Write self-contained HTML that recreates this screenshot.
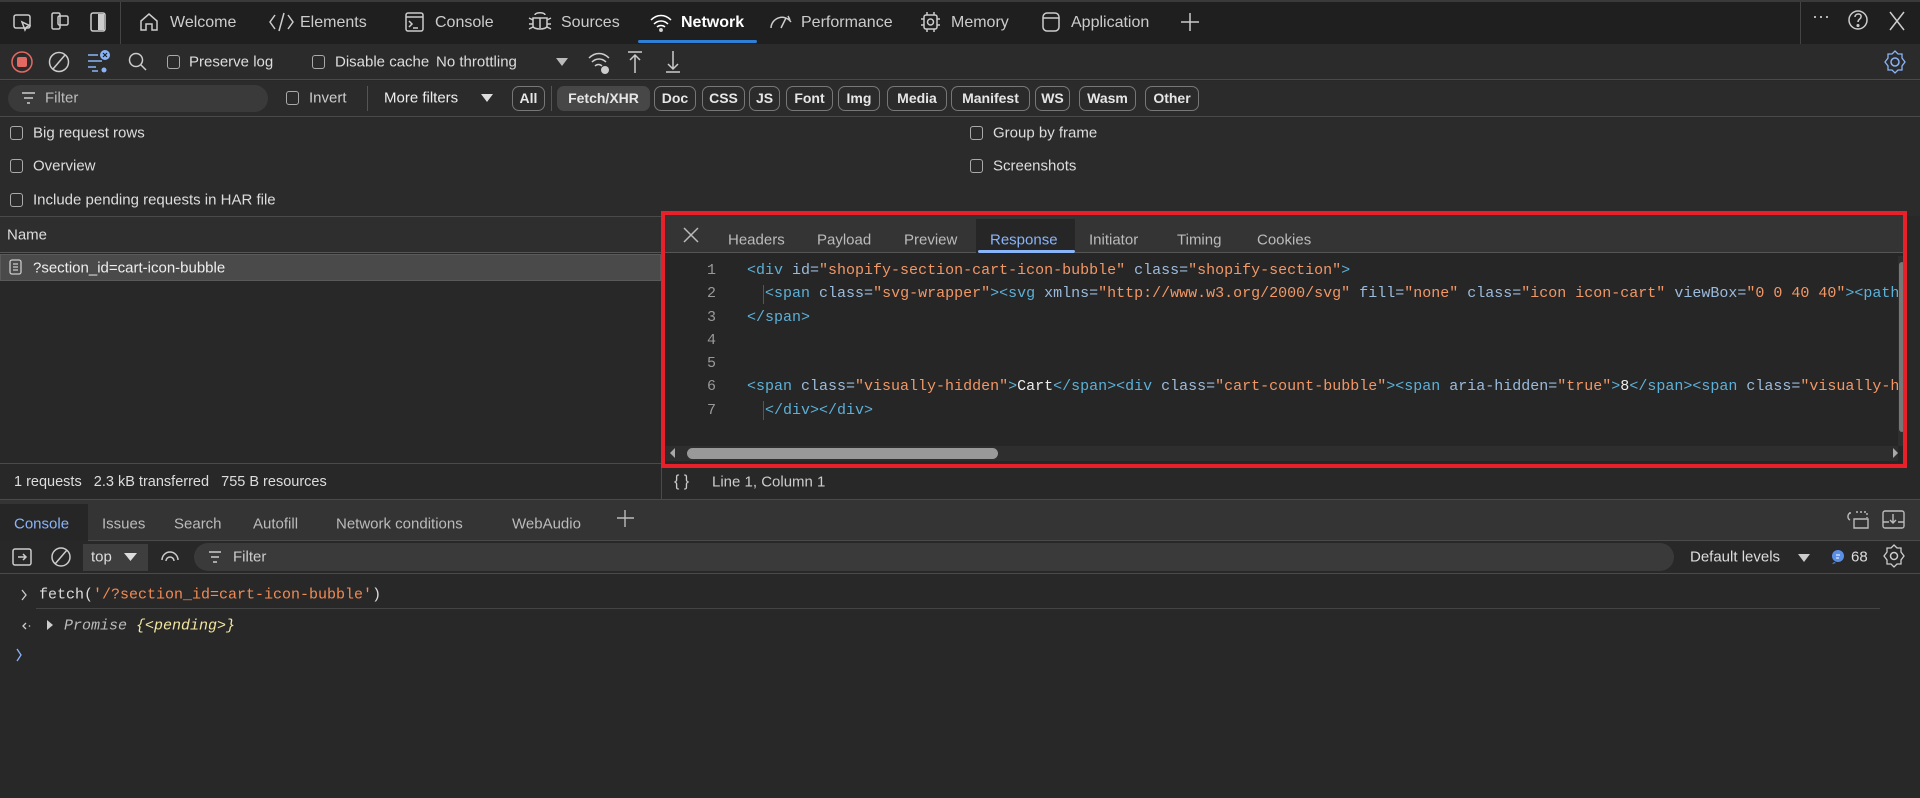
<!DOCTYPE html>
<html><head><meta charset="utf-8"><style>
*{box-sizing:border-box;margin:0;padding:0}
body{width:1920px;height:798px;overflow:hidden;background:#282828;font-family:"Liberation Sans",sans-serif;color:#ddd;position:relative;font-size:15px}
.a{position:absolute;white-space:nowrap}
.t{position:absolute;white-space:nowrap;transform:translateY(-50%)}
svg.o{position:absolute;left:0;top:0;width:1920px;height:798px;overflow:visible}
.cb{position:absolute;width:13px;height:14px;border:1.5px solid #aaa;border-radius:3px;transform:translateY(-50%)}
.btn{position:absolute;top:86px;height:25px;border:1px solid #777;border-radius:7px;color:#e6e6e6;font-size:14px;font-weight:bold;text-align:center;line-height:23px}
.mono{font-family:"Liberation Mono",monospace}
.tg{color:#5db0d7}.at{color:#9bbbdc}.vl{color:#f29766}
</style></head><body>
<!-- top tab bar -->
<div class="a" style="left:0;top:0;width:1920px;height:44px;background:#1f1f1f;border-top:2px solid #3a3a3a"></div>
<div class="a" style="left:120px;top:2px;width:1px;height:42px;background:#444"></div>
<div class="a" style="left:1800px;top:2px;width:1px;height:42px;background:#444"></div>
<svg class="o" viewBox="0 0 1920 798" stroke="#ccc" fill="none" stroke-width="1.5">
<rect x="14" y="15" width="16" height="13" rx="2"/><path d="M22 22l3 8 1.5-3 3-1.5z"/>
<rect x="52" y="13" width="8" height="16" rx="1.5"/><rect x="58" y="16" width="10" height="9" rx="1.5"/>
<rect x="91" y="13" width="14" height="18" rx="2"/><rect x="98" y="14" width="6" height="16" fill="#ccc" stroke="none"/>
<path d="M141 30v-9l8-7 8 7v9h-5v-6h-6v6z"/>
<path d="M275 15l-5 7 5 7M284 13l-5 18M288 15l5 7-5 7"/>
<rect x="406" y="13" width="17" height="18" rx="2"/><path d="M406 17h17M409 21l3 3-3 3M413 28h5"/>
<path d="M535 15c0-3 10-3 10 0M533 18h14v8c0 4-14 4-14 0zM533 20l-4-2M547 20l4-2M533 24h-4M547 24h4M533 27l-4 2M547 27l4 2M540 18v10"/>
<path d="M651 20c6-6 14-6 20 0M654 24c4-4 10-4 14 0M657 27c2-2 6-2 8 0" stroke="#fff"/><circle cx="661" cy="30" r="1.2" fill="#fff"/>
<path d="M771 28a11 11 0 0 1 20-6M781 28l5-10M788 16l2 4"/>
<rect x="924" y="15" width="13" height="14" rx="2"/><circle cx="930.5" cy="22" r="3"/><path d="M927 12v3M934 12v3M927 29v3M934 29v3M921 19h3M921 25h3M937 19h3M937 25h3"/>
<rect x="1043" y="13" width="16" height="18" rx="4"/><path d="M1043 18h16"/>
<path d="M1190 13v18M1181 22h18"/>
<circle cx="1858" cy="20" r="9"/><path d="M1855 17c0-4 7-4 6 0 0 2-3 2-3 5"/><circle cx="1858" cy="25.5" r=".8" fill="#ccc"/>
<path d="M1890 12l14 18M1904 12l-14 18"/>
</svg>
<div class="a" style="left:1812px;top:6px;color:#ccc;font-size:18px">···</div>
<div class="t" style="left:170px;top:23px;font-size:16px;color:#ccc">Welcome</div>
<div class="t" style="left:300px;top:23px;font-size:16px;color:#ccc">Elements</div>
<div class="t" style="left:435px;top:23px;font-size:16px;color:#ccc">Console</div>
<div class="t" style="left:561px;top:23px;font-size:16px;color:#ccc">Sources</div>
<div class="t" style="left:681px;top:23px;font-size:16px;color:#fff;font-weight:bold">Network</div>
<div class="a" style="left:638px;top:40px;width:119px;height:3px;background:#2f7fd6;border-radius:2px"></div>
<div class="t" style="left:801px;top:23px;font-size:16px;color:#ccc">Performance</div>
<div class="t" style="left:951px;top:23px;font-size:16px;color:#ccc">Memory</div>
<div class="t" style="left:1071px;top:23px;font-size:16px;color:#ccc">Application</div>

<!-- toolbar row -->
<div class="a" style="left:0;top:44px;width:1920px;height:36px;background:#2b2b2b;border-bottom:1px solid #4a4a4a"></div>
<svg class="o" viewBox="0 0 1920 798" fill="none" stroke-width="1.5">
<circle cx="22" cy="62" r="10" stroke="#e46962"/><rect x="17" y="57" width="10" height="10" rx="2" fill="#e46962"/>
<circle cx="59" cy="62" r="9.5" stroke="#ccc"/><path d="M53 69l12-14" stroke="#ccc"/>
<path d="M88 55h10M88 61h14M88 67h8M92 71h6" stroke="#8ab4f8"/><circle cx="105" cy="55" r="5" fill="#8ab4f8"/><path d="M103 53l4 4M107 53l-4 4" stroke="#1f1f1f" stroke-width="1.2"/><circle cx="104" cy="70" r="2.5" fill="#8ab4f8"/>
<circle cx="136" cy="60" r="6.5" stroke="#ccc"/><path d="M141 65l5 5" stroke="#ccc"/>
<path d="M556 58h12l-6 8z" fill="#bbb"/>
<path d="M589 58c6-6 14-6 20 0M592 62c4-4 10-4 14 0M595 66c2-2 5-2 7 0" stroke="#ccc"/><circle cx="605" cy="70" r="4" fill="#ccc"/>
<path d="M628 52h14M635 55v18M630 60l5-5 5 5" stroke="#ccc"/>
<path d="M666 72h14M673 51v18M668 64l5 5 5-5" stroke="#ccc"/>
<circle cx="1895" cy="62" r="4" stroke="#8ab4f8"/><path d="M1895 51l3 3h4v4l3 4-3 4v4h-4l-3 3-3-3h-4v-4l-3-4 3-4v-4h4z" stroke="#8ab4f8" stroke-width="1.3"/>
</svg>
<div class="cb" style="left:167px;top:62px"></div><div class="t" style="left:189px;top:62px">Preserve log</div>
<div class="cb" style="left:312px;top:62px"></div><div class="t" style="left:335px;top:62px">Disable cache</div>
<div class="t" style="left:436px;top:62px">No throttling</div>

<!-- filter row -->
<div class="a" style="left:0;top:81px;width:1920px;height:36px;background:#2b2b2b;border-bottom:1px solid #4a4a4a"></div>
<div class="a" style="left:8px;top:85px;width:260px;height:27px;background:#3a3a3a;border-radius:14px"></div>
<svg class="o" viewBox="0 0 1920 798" stroke="#ccc" stroke-width="1.5"><path d="M22 93h13M24 98h9M27 103h3"/><path d="M481 94h12l-6 8z" fill="#ddd" stroke="none"/></svg>
<div class="t" style="left:45px;top:98px;color:#bbb">Filter</div>
<div class="cb" style="left:286px;top:98px"></div><div class="t" style="left:309px;top:98px;color:#ccc">Invert</div>
<div class="a" style="left:367px;top:86px;width:1px;height:25px;background:#555"></div>
<div class="t" style="left:384px;top:98px;color:#eee">More filters</div>
<div class="btn" style="left:512px;width:33px">All</div>
<div class="a" style="left:551px;top:86px;width:1px;height:25px;background:#555"></div>
<div class="btn" style="left:557px;width:93px;background:#474747;border-color:#474747">Fetch/XHR</div>
<div class="btn" style="left:654px;width:42px">Doc</div>
<div class="btn" style="left:702px;width:43px">CSS</div>
<div class="btn" style="left:749px;width:31px">JS</div>
<div class="btn" style="left:786px;width:47px">Font</div>
<div class="btn" style="left:838px;width:42px">Img</div>
<div class="btn" style="left:887px;width:60px">Media</div>
<div class="btn" style="left:951px;width:79px">Manifest</div>
<div class="btn" style="left:1035px;width:35px">WS</div>
<div class="btn" style="left:1079px;width:57px">Wasm</div>
<div class="btn" style="left:1145px;width:54px">Other</div>

<!-- settings checkboxes -->
<div class="a" style="left:0;top:117px;width:1920px;height:99px;background:#2b2b2b"></div>
<div class="cb" style="left:10px;top:133px"></div><div class="t" style="left:33px;top:133px">Big request rows</div>
<div class="cb" style="left:10px;top:166px"></div><div class="t" style="left:33px;top:166px">Overview</div>
<div class="cb" style="left:10px;top:200px"></div><div class="t" style="left:33px;top:200px">Include pending requests in HAR file</div>
<div class="cb" style="left:970px;top:133px"></div><div class="t" style="left:993px;top:133px">Group by frame</div>
<div class="cb" style="left:970px;top:166px"></div><div class="t" style="left:993px;top:166px">Screenshots</div>

<!-- left table -->
<div class="a" style="left:0;top:216px;width:661px;height:37px;background:#2e2e2e;border-top:1px solid #4a4a4a;border-bottom:1px solid #555"></div>
<div class="t" style="left:7px;top:235px;color:#ddd">Name</div>
<div class="a" style="left:0;top:254px;width:661px;height:27px;background:#4a4a4a;border:1px solid #5a5a5a"></div>
<svg class="o" viewBox="0 0 1920 798" stroke="#ccc" stroke-width="1.3" fill="none"><rect x="10" y="260" width="11" height="14" rx="2"/><path d="M13 264h5M13 267h5M13 270h5"/></svg>
<div class="t" style="left:33px;top:268px;color:#eee">?section_id=cart-icon-bubble</div>
<div class="a" style="left:0;top:281px;width:661px;height:182px;background:#282828"></div>
<div class="a" style="left:0;top:463px;width:661px;height:36px;background:#282828;border-top:1px solid #4a4a4a"></div>
<div class="t" style="left:14px;top:482px;color:#ddd;font-size:14.5px">1 requests &nbsp;&nbsp;2.3 kB transferred &nbsp;&nbsp;755 B resources</div>

<!-- response panel -->
<div class="a" style="left:661px;top:215px;width:1246px;height:38px;background:#343434;border-bottom:1px solid #555"></div>
<div class="a" style="left:976px;top:219px;width:99px;height:34px;background:#262626"></div>
<div class="a" style="left:978px;top:250px;width:97px;height:3px;background:#8ab4f8;border-radius:2px"></div>
<svg class="o" viewBox="0 0 1920 798" stroke="#bbb" stroke-width="1.5"><path d="M684 228l14 14M698 228l-14 14"/></svg>
<div class="t" style="left:728px;top:240px;color:#bbb">Headers</div>
<div class="t" style="left:817px;top:240px;color:#bbb">Payload</div>
<div class="t" style="left:904px;top:240px;color:#bbb">Preview</div>
<div class="t" style="left:990px;top:240px;color:#8ab4f8">Response</div>
<div class="t" style="left:1089px;top:240px;color:#bbb">Initiator</div>
<div class="t" style="left:1177px;top:240px;color:#bbb">Timing</div>
<div class="t" style="left:1257px;top:240px;color:#bbb">Cookies</div>
<div class="a" style="left:661px;top:253px;width:1246px;height:210px;background:#262626"></div>
<div class="a mono" style="left:661px;top:259px;width:1237px;height:187px;overflow:hidden;font-size:15px;line-height:23.3px">
<div style="position:absolute;left:0;top:0;width:55px;text-align:right;color:#999">1<br>2<br>3<br>4<br>5<br>6<br>7</div>
<div style="position:absolute;left:102px;top:26px;width:1px;height:19px;background:#555"></div>
<div style="position:absolute;left:102px;top:142px;width:1px;height:19px;background:#555"></div>
<div style="position:absolute;left:86px;top:0;color:#eee;white-space:pre"><span class="tg">&lt;div</span> <span class="at">id=</span><span class="vl">"shopify-section-cart-icon-bubble"</span> <span class="at">class=</span><span class="vl">"shopify-section"</span><span class="tg">&gt;</span>
  <span class="tg">&lt;span</span> <span class="at">class=</span><span class="vl">"svg-wrapper"</span><span class="tg">&gt;&lt;svg</span> <span class="at">xmlns=</span><span class="vl">"http://www.w3.org/2000/svg"</span> <span class="at">fill=</span><span class="vl">"none"</span> <span class="at">class=</span><span class="vl">"icon icon-cart"</span> <span class="at">viewBox=</span><span class="vl">"0 0 40 40"</span><span class="tg">&gt;&lt;path</span>
<span class="tg">&lt;/span&gt;</span>


<span class="tg">&lt;span</span> <span class="at">class=</span><span class="vl">"visually-hidden"</span><span class="tg">&gt;</span>Cart<span class="tg">&lt;/span&gt;&lt;div</span> <span class="at">class=</span><span class="vl">"cart-count-bubble"</span><span class="tg">&gt;&lt;span</span> <span class="at">aria-hidden=</span><span class="vl">"true"</span><span class="tg">&gt;</span>8<span class="tg">&lt;/span&gt;&lt;span</span> <span class="at">class=</span><span class="vl">"visually-hidden</span>
  <span class="tg">&lt;/div&gt;&lt;/div&gt;</span></div>
</div>
<div class="a" style="left:1898px;top:256px;width:9px;height:190px;background:#2e2e2e"></div>
<div class="a" style="left:1899px;top:262px;width:6px;height:170px;background:#777;border-radius:3px"></div>
<div class="a" style="left:665px;top:446px;width:1233px;height:15px;background:#2e2e2e"></div>
<div class="a" style="left:687px;top:448px;width:311px;height:11px;background:#999;border-radius:6px"></div>
<svg class="o" viewBox="0 0 1920 798" fill="#aaa"><path d="M670 453l5-5v10z"/><path d="M1898 453l-5-5v10z"/></svg>
<!-- red box -->
<div class="a" style="left:661px;top:211px;width:1246px;height:257px;border:4px solid #e8202a"></div>
<div class="a" style="left:661px;top:468px;width:1259px;height:31px;background:#282828"></div>
<div class="a" style="left:661px;top:468px;width:1px;height:31px;background:#4a4a4a"></div>
<div class="t" style="left:674px;top:482px;color:#ccc;font-size:16px">{ }</div>
<div class="t" style="left:712px;top:482px;color:#ccc">Line 1, Column 1</div>

<!-- drawer tabs -->
<div class="a" style="left:0;top:499px;width:1920px;height:42px;background:#343434;border-top:1px solid #4a4a4a;border-bottom:1px solid #4a4a4a"></div>
<div class="a" style="left:0;top:504px;width:88px;height:37px;background:#262626"></div>
<div class="t" style="left:14px;top:524px;color:#8ab4f8">Console</div>
<div class="t" style="left:102px;top:524px;color:#bbb">Issues</div>
<div class="t" style="left:174px;top:524px;color:#bbb">Search</div>
<div class="t" style="left:253px;top:524px;color:#bbb">Autofill</div>
<div class="t" style="left:336px;top:524px;color:#bbb">Network conditions</div>
<div class="t" style="left:512px;top:524px;color:#bbb">WebAudio</div>
<svg class="o" viewBox="0 0 1920 798" stroke="#bbb" stroke-width="1.4" fill="none">
<path d="M625 510v17M617 518h17"/>
<path d="M1850 513a4 4 0 0 0 0 7M1849 513h2M1854 519h14v9h-14z"/><path d="M1856 512h11v6" stroke-dasharray="2 2"/>
<rect x="1883" y="511" width="21" height="17" rx="2"/><path d="M1883 522h6M1898 522h6M1893 514v9M1890 520l3 3 3-3"/>
</svg>

<!-- console toolbar -->
<div class="a" style="left:0;top:541px;width:1920px;height:33px;background:#282828;border-bottom:1px solid #4a4a4a"></div>
<div class="a" style="left:83px;top:544px;width:65px;height:27px;background:#3e3e3e"></div>
<div class="a" style="left:194px;top:543px;width:1480px;height:28px;background:#3a3a3a;border-radius:14px"></div>
<svg class="o" viewBox="0 0 1920 798" stroke="#ccc" stroke-width="1.5" fill="none">
<rect x="13" y="549" width="18" height="16" rx="2"/><path d="M18 557h8M23 554l3 3-3 3"/>
<circle cx="61" cy="557" r="9"/><path d="M55 564l12-14"/>
<path d="M124 553h13l-6.5 8z" fill="#ddd" stroke="none"/>
<path d="M162 560a8 8 0 0 1 16 0M166 561a4 4 0 0 1 8 0"/>
<path d="M209 552h12M211 557h8M213 562h4"/>
<path d="M1798 554h12l-6 8z" fill="#ccc" stroke="none"/>
<circle cx="1838" cy="556" r="6" fill="#5b8fe6" stroke="none"/><path d="M1834 562l-2 2 4-1z" fill="#5b8fe6" stroke="none"/><path d="M1836 555h4M1836 558h3" stroke="#fff" stroke-width="1"/>
<circle cx="1894" cy="556" r="3.5"/><path d="M1894 545l3 3h4v4l3 4-3 4v4h-4l-3 3-3-3h-4v-4l-3-4 3-4v-4h4z" stroke-width="1.3"/>
</svg>
<div class="t" style="left:91px;top:557px;color:#ddd">top</div>
<div class="t" style="left:233px;top:557px;color:#ccc">Filter</div>
<div class="t" style="left:1690px;top:557px;color:#ddd">Default levels</div>
<div class="t" style="left:1851px;top:557px;color:#ddd">68</div>

<!-- console output -->
<svg class="o" viewBox="0 0 1920 798" fill="none" stroke-width="1.3">
<path d="M22 590l4 5-4 5" stroke="#ccc"/>
<path d="M26 623l-3 3 3 3" stroke="#ccc"/><circle cx="29.5" cy="626" r=".8" fill="#ccc" stroke="none"/>
<path d="M47 620l6 5-6 5z" fill="#ccc" stroke="none"/>
<path d="M17 649l4 6-4 6" stroke="#8ab4f8"/>
</svg>
<div class="t mono" style="left:39px;top:595px;font-size:15px;color:#ddd">fetch(<span style="color:#f28b54">'/?section_id=cart-icon-bubble'</span>)</div>
<div class="a" style="left:36px;top:608px;width:1844px;height:1px;background:#444"></div>
<div class="t mono" style="left:64px;top:626px;font-size:15px;font-style:italic;color:#bbb">Promise <span style="color:#f2e6a0">{&lt;pending&gt;}</span></div>
</body></html>
